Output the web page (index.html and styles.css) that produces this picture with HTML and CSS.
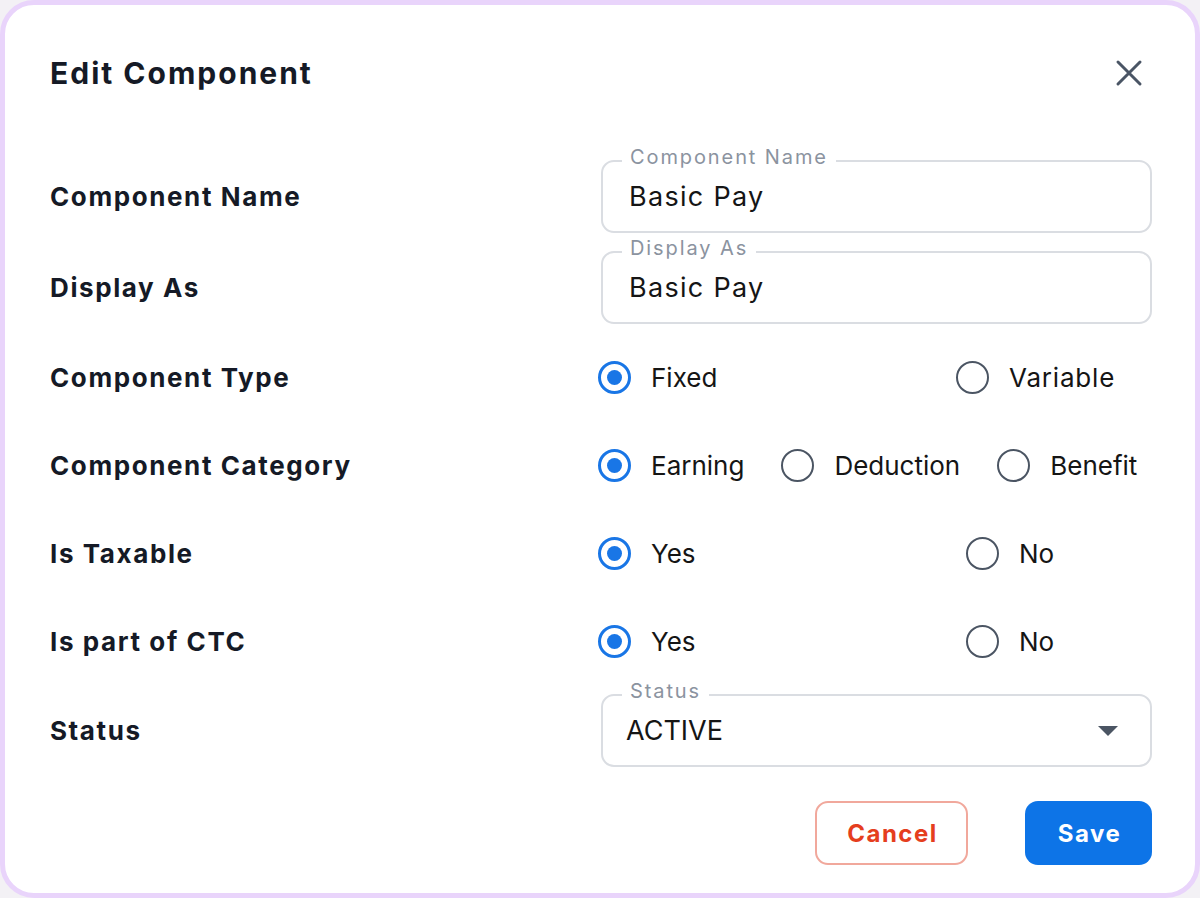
FILE: index.html
```html
<!DOCTYPE html>
<html lang="en">
<head>
<meta charset="utf-8">
<title>Edit Component</title>
<link rel="stylesheet" href="styles.css">
</head>
<body>
<div class="dialog">
  <header class="head">
    <h1 class="title">Edit Component</h1>
    <button class="close" aria-label="Close">
      <svg width="28" height="28" viewBox="0 0 28 28"><path d="M3 3 L25 25 M25 3 L3 25" stroke="#4a5565" stroke-width="3" stroke-linecap="round" fill="none"/></svg>
    </button>
  </header>
  <div class="form">
    <div class="row">
      <div class="label">Component Name</div>
      <div class="outlined">
        <span class="legend">Component Name</span>
        <span class="value">Basic Pay</span>
      </div>
    </div>
    <div class="row">
      <div class="label">Display As</div>
      <div class="outlined">
        <span class="legend">Display As</span>
        <span class="value">Basic Pay</span>
      </div>
    </div>
    <div class="row radio-row">
      <div class="label">Component Type</div>
      <div class="radios two type">
        <label class="opt"><span class="radio on"></span><span class="opt-text">Fixed</span></label>
        <label class="opt"><span class="radio"></span><span class="opt-text wide">Variable</span></label>
      </div>
    </div>
    <div class="row radio-row">
      <div class="label">Component Category</div>
      <div class="radios three">
        <label class="opt"><span class="radio on"></span><span class="opt-text">Earning</span></label>
        <label class="opt"><span class="radio"></span><span class="opt-text">Deduction</span></label>
        <label class="opt"><span class="radio"></span><span class="opt-text">Benefit</span></label>
      </div>
    </div>
    <div class="row radio-row">
      <div class="label">Is Taxable</div>
      <div class="radios two yn">
        <label class="opt"><span class="radio on"></span><span class="opt-text">Yes</span></label>
        <label class="opt"><span class="radio"></span><span class="opt-text">No</span></label>
      </div>
    </div>
    <div class="row radio-row">
      <div class="label">Is part of CTC</div>
      <div class="radios two yn">
        <label class="opt"><span class="radio on"></span><span class="opt-text">Yes</span></label>
        <label class="opt"><span class="radio"></span><span class="opt-text">No</span></label>
      </div>
    </div>
    <div class="row">
      <div class="label">Status</div>
      <div class="outlined select">
        <span class="legend">Status</span>
        <span class="value status">ACTIVE</span>
        <svg class="caret" width="20" height="10" viewBox="0 0 20 10"><path d="M0 0 L20 0 L10 10 Z" fill="#4b5563"/></svg>
      </div>
    </div>
  </div>
  <div class="actions">
    <button class="btn cancel">Cancel</button>
    <button class="btn save">Save</button>
  </div>
</div>
</body>
</html>
```

FILE: styles.css
```css
* { box-sizing: border-box; }
html, body { margin: 0; padding: 0; }
body {
  width: 1200px;
  height: 898px;
  background: #f3f1f5;
  font-family: Inter, "Open Sans", sans-serif;
  color: #151a26;
}
.dialog {
  width: 1200px;
  height: 898px;
  background: #ffffff;
  border: 5px solid #e9d4fb;
  border-radius: 34px;
  padding: 48px 43px 0 45px;
}
.head {
  height: 40px;
  margin-bottom: 67px;
  display: flex;
  align-items: center;
  justify-content: space-between;
}
.title {
  margin: 0;
  font-size: 30px;
  line-height: 40px;
  font-weight: 700;
  letter-spacing: 2px;
  color: #151a26;
}
.close {
  border: 0;
  background: transparent;
  padding: 0;
  width: 28px;
  height: 28px;
  margin-right: 9px;
  display: flex;
}
.form {
  display: flex;
  flex-direction: column;
  gap: 18px;
}
.row {
  display: grid;
  grid-template-columns: 1fr 551px;
  align-items: center;
}
.radio-row { height: 70px; }
.label {
  font-size: 26px;
  font-weight: 700;
  letter-spacing: 1.6px;
  color: #151a26;
}
.outlined {
  position: relative;
  height: 73px;
  border: 2px solid #dadde2;
  border-radius: 13px;
  display: flex;
  align-items: center;
  padding-left: 26px;
}
.legend {
  position: absolute;
  top: -18px;
  left: 19px;
  padding: 0 8px;
  background: #ffffff;
  font-size: 20px;
  line-height: 26px;
  letter-spacing: 1.9px;
  color: #8b939f;
}
.value {
  font-size: 27px;
  letter-spacing: 1.3px;
  color: #151515;
}
.select { padding-right: 32px; }
.status { flex: 1; margin-left: -3px; letter-spacing: 0; }
.caret { display: block; }
.radios {
  display: flex;
  align-items: center;
  margin-left: -3px;
}
.radios.type { display: grid; grid-template-columns: 358px auto; }
.radios.yn { display: grid; grid-template-columns: 368px auto; }
.radios.three { gap: 37px; }
.opt {
  display: flex;
  align-items: center;
  gap: 20px;
}
.radio {
  width: 33px;
  height: 33px;
  border-radius: 50%;
  border: 2.5px solid #4b5563;
  display: flex;
  align-items: center;
  justify-content: center;
}
.radio.on { border: 3px solid #1976e6; }
.radio.on::after {
  content: "";
  width: 15px;
  height: 15px;
  border-radius: 50%;
  background: #1976e6;
}
.opt-text {
  font-size: 26px;
  color: #151515;
}
.opt-text.wide { letter-spacing: 0.8px; }
.actions {
  display: flex;
  justify-content: flex-end;
  gap: 57px;
  margin-top: 34px;
}
.btn {
  height: 64px;
  border-radius: 13px;
  font-family: Inter, "Open Sans", sans-serif;
  font-size: 24px;
  font-weight: 700;
  letter-spacing: 1.5px;
  padding: 0 0 0 2px;
  cursor: pointer;
}
.cancel {
  width: 153px;
  background: #ffffff;
  border: 2px solid #f1a89c;
  color: #e53e1e;
}
.save {
  width: 127px;
  background: #0d74e7;
  border: 0;
  color: #ffffff;
}
```
